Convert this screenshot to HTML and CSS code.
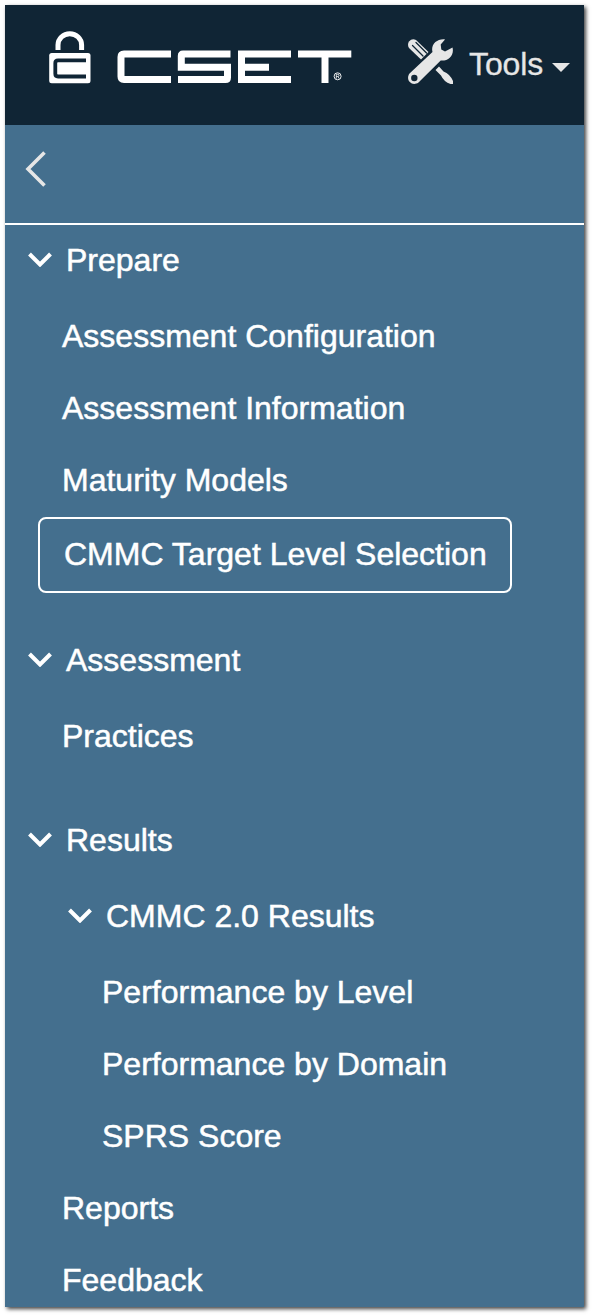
FILE: index.html
```html
<!DOCTYPE html>
<html lang="en">
<head>
<meta charset="utf-8">
<title>CSET</title>
<link rel="stylesheet" href="styles.css">
</head>
<body>
<div class="window">
  <header class="topbar">
    <svg class="lock" width="42" height="54" viewBox="0 0 42 54" fill="none">
      <path d="M9 20v-5a11.800 11.300 0 0 1 23.600 0v5" stroke="#fff" stroke-width="5"/>
      <rect x=".2" y="23" width="41.3" height="30.3" rx="2.500" fill="#fff"/>
      <path d="M37 30.300H9q-2.700 0-2.700 2.700V43.800q0 2.700 2.700 2.700H37" stroke="#102535" stroke-width="3.800"/>
    </svg>
    <svg class="wordmark" width="235" height="35" viewBox="117 50 235 35" fill="none" role="img" aria-label="CSET">
      <g stroke="#fff" stroke-width="7">
        <path d="M171 54H124q-3 0-3 3V76.500q0 3 3 3H171"/>
        <path d="M230.500 54H183q-1.700 0-1.700 2V67.300H227.500V77.500q0 2-2 2H178"/>
        <path d="M291 54H241.500V79.500H291M241.500 67.300H269"/>
        <path d="M298 54H351.300M325 54V83"/>
      </g>
      <circle cx="337.600" cy="76.300" r="3.500" stroke="#fff" stroke-width=".9"/>
      <path d="M336.300 78.600V74.300H337.800q1.300 0 1.300 1.100t-1.300 1.100H336.300M337.900 76.500l1.300 2.100" stroke="#fff" stroke-width=".8"/>
    </svg>
    <div class="tools">
      <svg class="tools-icon" width="46" height="46" viewBox="0 0 46 46">
        <path d="M1 2.500Q4-1 8 1L20.500 13 13 20.500 1 9Q-1 5.500 1 2.500Z" fill="#e6e6e6"/>
        <path d="M4.500 6.500 15 17M8 3.500 18.500 14" stroke="#102535" stroke-width="1.300" stroke-linecap="round"/>
        <path d="M27.500 31 31 27.500 35.500 32.500Q42 35 45 42V45H42.500Q36 43 33 36.500Z" fill="#e6e6e6"/>
        <path d="M24.500 13C22.500 5.500 29-.5 37 .4L32.700 5.500 33.300 10.500 37 12.600 44.500 8.500C46.500 16 40.500 22.300 32.700 21.500L10.500 43.500C4 48-3 41 1.500 34.500L24.500 13Z" fill="#e6e6e6"/>
        <circle cx="6.300" cy="39" r="3.200" fill="#102535"/>
      </svg>
      <span class="tools-label">Tools</span>
      <span class="caret"></span>
    </div>
  </header>
  <div class="collapse">
    <svg width="22" height="36" viewBox="0 0 22 36" fill="none"><path d="M19.500 1.500 3 18 19.500 34.500" stroke="#e6e6e6" stroke-width="3.600"/></svg>
  </div>
  <nav class="nav">
    <div class="group"><svg class="chevron" viewBox="0 0 24 15"><path d="M1.500 2 12 12.500 22.500 2"/></svg><span>Prepare</span></div>
    <a class="item">Assessment Configuration</a>
    <a class="item">Assessment Information</a>
    <a class="item">Maturity Models</a>
    <a class="item selected">CMMC Target Level Selection</a>
    <div class="group spaced"><svg class="chevron" viewBox="0 0 24 15"><path d="M1.500 2 12 12.500 22.500 2"/></svg><span>Assessment</span></div>
    <a class="item">Practices</a>
    <div class="group spaced"><svg class="chevron" viewBox="0 0 24 15"><path d="M1.500 2 12 12.500 22.500 2"/></svg><span>Results</span></div>
    <div class="group nested"><svg class="chevron" viewBox="0 0 24 15"><path d="M1.500 2 12 12.500 22.500 2"/></svg><span>CMMC 2.0 Results</span></div>
    <a class="item deep">Performance by Level</a>
    <a class="item deep">Performance by Domain</a>
    <a class="item deep">SPRS Score</a>
    <a class="item">Reports</a>
    <a class="item">Feedback</a>
  </nav>
</div>
</body>
</html>
```
FILE: styles.css
```css
* { box-sizing: border-box; }
body {
  margin: 0;
  height: 1316px;
  padding: 5px;
  overflow: hidden;
  background: #fff;
  font-family: "Liberation Sans", Arial, sans-serif;
}
.window {
  display: flex;
  flex-direction: column;
  width: 579px;
  height: 1302px;
  overflow: hidden;
  background: #446f8e;
  box-shadow: 2px 2px 4px rgba(0, 0, 0, .75);
}
.topbar {
  display: flex;
  flex: none;
  align-items: flex-start;
  height: 120px;
  padding-left: 44px;
  background: #102535;
}
.lock { margin-top: 25px; }
.wordmark { margin: 45px 0 0 26px; }
.tools {
  display: flex;
  align-items: center;
  height: 118px;
  margin-left: 56px;
  color: #e6e6e6;
}
.tools-icon { margin: 0 15px 5px 0; }
.tools-label {
  font-size: 32px;
  line-height: 36px;
  letter-spacing: -.1px;
  -webkit-text-stroke: .3px;
}
.caret {
  margin: 6px 0 0 9px;
  border: 9px solid transparent;
  border-top-color: #e6e6e6;
  border-bottom: 0;
}
.collapse {
  flex: none;
  height: 100px;
  padding: 26px 0 0 20px;
  border-bottom: 2px solid #fff;
}
.nav {
  display: flex;
  flex-direction: column;
  color: #fff;
  font-size: 32px;
  -webkit-text-stroke: .5px;
}
.group {
  display: flex;
  flex: none;
  align-items: center;
  gap: 14px;
  height: 70px;
  margin-bottom: 5px;
  padding-left: 23px;
}
.spaced { margin-top: 32px; }
.item + .spaced { margin-top: 33px; }
.selected + .spaced { margin-top: 32px; }
.nested { margin-top: 1px; padding-left: 63px; }
.chevron {
  width: 24px;
  height: 15px;
  margin-bottom: 2px;
  fill: none;
  stroke: #fff;
  stroke-width: 4;
}
.item {
  flex: none;
  height: 72px;
  padding-left: 57px;
  line-height: 72px;
  white-space: nowrap;
}
.deep { padding-left: 97px; }
.selected {
  width: 474px;
  height: 76px;
  margin: 1px 0 0 33px;
  padding-left: 24px;
  border: 2px solid #fff;
  border-radius: 8px;
  line-height: 70px;
}
```
